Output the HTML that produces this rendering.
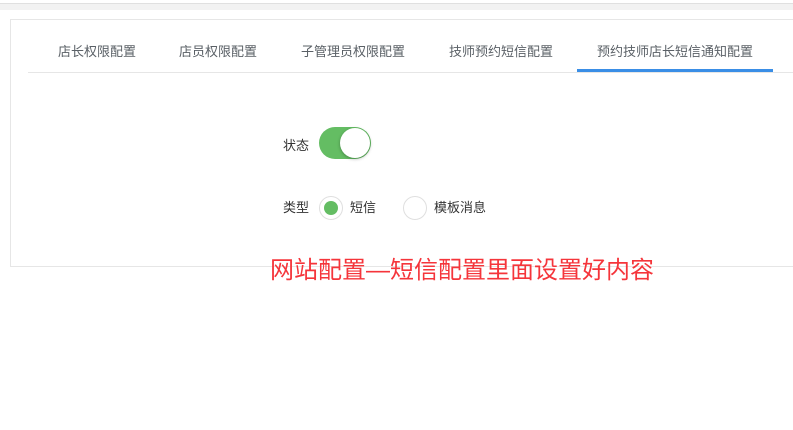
<!DOCTYPE html>
<html><head><meta charset="utf-8"><style>
body{margin:0;width:793px;height:430px;background:#fff;position:relative;overflow:hidden;font-family:"Liberation Sans","Noto Sans CJK SC",sans-serif;}
.top{position:absolute;left:0;top:3px;width:793px;height:6px;background:#f2f2f2;border-top:1px solid #e0e0e0;}
.card{position:absolute;left:10px;top:19px;width:800px;height:248px;border:1px solid #e6e6e6;box-sizing:border-box;}
.tab{position:absolute;top:41px;font-size:13px;color:#5a6066;white-space:nowrap;}
.line{position:absolute;left:28px;top:72px;width:770px;height:1px;background:#e6e6e6;}
.act{position:absolute;left:577px;top:69px;width:196px;height:3px;background:#3a8ee6;}
.lbl{position:absolute;font-size:13px;color:#333;}
.tog{position:absolute;left:319px;top:127px;width:52px;height:32px;border-radius:16px;background:#64bd63;}
.knob{position:absolute;right:1px;top:1px;width:30px;height:30px;border-radius:50%;background:#fff;box-shadow:0 1px 3px rgba(0,0,0,.3);}
.rad{position:absolute;top:196px;width:22px;height:22px;border:1px solid #dfdfdf;border-radius:50%;background:#fff;}
.rad i{position:absolute;left:4px;top:4px;width:14px;height:14px;border-radius:50%;background:#64bd63;}
.red{position:absolute;left:270px;top:250px;font-size:24px;color:#f5353b;white-space:nowrap;}
</style></head><body>
<div class="top"></div>
<div class="card"></div>
<div class="tab" style="left:58px">店长权限配置</div>
<div class="tab" style="left:179px">店员权限配置</div>
<div class="tab" style="left:301px">子管理员权限配置</div>
<div class="tab" style="left:449px">技师预约短信配置</div>
<div class="tab" style="left:597px">预约技师店长短信通知配置</div>
<div class="line"></div>
<div class="act"></div>
<div class="lbl" style="left:283px;top:135px">状态</div>
<div class="tog"><div class="knob"></div></div>
<div class="lbl" style="left:283px;top:197px">类型</div>
<div class="rad" style="left:319px"><i></i></div>
<div class="lbl" style="left:350px;top:197px">短信</div>
<div class="rad" style="left:403px"></div>
<div class="lbl" style="left:434px;top:197px">模板消息</div>
<div class="red">网站配置—短信配置里面设置好内容</div>
</body></html>
